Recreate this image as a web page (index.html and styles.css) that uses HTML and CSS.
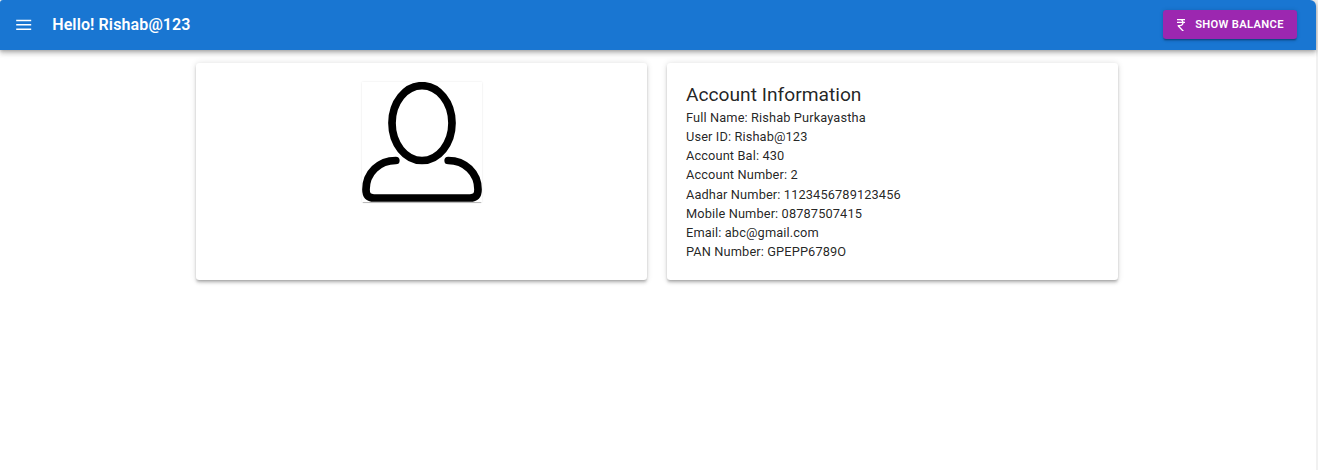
FILE: index.html
```html
<!DOCTYPE html>
<html lang="en">
<head>
<meta charset="utf-8">
<title>Account</title>
<link rel="stylesheet" href="styles.css">
</head>
<body>
<div class="page">
  <header class="app-bar">
    <svg class="menu-icon" viewBox="0 0 20 20"><path d="M2.200 4.700h15v1.500h-15zM2.200 9.100h15v1.500h-15zM2.200 13.600h15v1.500h-15z"/></svg>
    <h1 class="title">Hello! Rishab@123</h1>
    <button class="balance-button" type="button">
      <svg class="rupee-icon" viewBox="0 0 24 24"><path d="M13.66 7c-.56-1.18-1.76-2-3.16-2H6V3h12v2h-3.26c.48.58.84 1.26 1.05 2H18v2h-2.02c-.25 2.8-2.61 5-5.48 5h-.73l6.73 7h-2.77L7 14v-2h3.500c1.76 0 3.22-1.3 3.46-3H6V7h7.66z"/></svg>
      <span>SHOW BALANCE</span>
    </button>
  </header>
  <main class="cards">
    <section class="card">
      <svg class="avatar" viewBox="0 0 120 120">
        <ellipse cx="60" cy="41.100" rx="30" ry="37.400"/>
        <path d="M33.800 78.500C17 78.500 4 91 4 107.500C4 113.500 6.500 116 12 116H108C113.500 116 116 113.500 116 107.500C116 91 103 78.500 86.200 78.500"/>
      </svg>
    </section>
    <section class="card">
      <h2 class="card-title">Account Information</h2>
      <p class="line">Full Name: Rishab Purkayastha</p>
      <p class="line">User ID: Rishab@123</p>
      <p class="line">Account Bal: 430</p>
      <p class="line">Account Number: 2</p>
      <p class="line">Aadhar Number: 1123456789123456</p>
      <p class="line">Mobile Number: 08787507415</p>
      <p class="line">Email: abc@gmail.com</p>
      <p class="line">PAN Number: GPEPP6789O</p>
    </section>
  </main>
</div>
</body>
</html>
```
FILE: styles.css
```css
* { box-sizing: border-box; }
body {
  margin: 0;
  background: #f1f1f1;
  font-family: Roboto, sans-serif;
  color: rgba(0, 0, 0, 0.87);
  overflow: hidden;
}
.page {
  width: 1316px;
  height: 470px;
  background: #fff;
  border-top-right-radius: 6px;
}
.app-bar {
  display: flex;
  align-items: center;
  height: 50px;
  padding: 0 19px 1px 14px;
  background: #1976d2;
  color: #fff;
  border-radius: 3px 6px 0 0;
  box-shadow: 0 1.6px 3.2px -0.8px rgba(0, 0, 0, 0.2), 0 3.2px 4px rgba(0, 0, 0, 0.14), 0 0.8px 8px rgba(0, 0, 0, 0.12);
}
.menu-icon {
  width: 20px;
  height: 20px;
  fill: currentColor;
}
.title {
  flex: 1;
  margin: 0 0 0 18.2px;
  font-size: 16px;
  font-weight: 600;
  line-height: 25.6px;
  letter-spacing: 0.12px;
}
.balance-button {
  display: flex;
  align-items: center;
  width: 134px;
  height: 29.2px;
  padding: 0 0 0 9.8px;
  border: 0;
  border-radius: 3.2px;
  background: #9c27b0;
  color: #fff;
  font: 600 11.2px/19.6px Roboto, sans-serif;
  letter-spacing: 0.32px;
  white-space: nowrap;
  box-shadow: 0 2.4px 0.8px -1.6px rgba(0, 0, 0, 0.2), 0 1.6px 1.6px rgba(0, 0, 0, 0.14), 0 0.8px 4px rgba(0, 0, 0, 0.12);
}
.rupee-icon {
  width: 16px;
  height: 16px;
  margin-right: 6.4px;
  fill: currentColor;
}
.cards {
  display: grid;
  grid-template-columns: 1fr 1fr;
  gap: 19.6px;
  width: 922px;
  margin: 13px 0 0 196px;
}
.card {
  height: 217px;
  padding: 19.2px;
  border-radius: 3.2px;
  background: #fff;
  box-shadow: 0 2.4px 2.4px -1.6px rgba(0, 0, 0, 0.2), 0 2.4px 3.2px rgba(0, 0, 0, 0.14), 0 0.8px 6.4px rgba(0, 0, 0, 0.12);
}
.avatar {
  display: block;
  width: 120px;
  height: 120px;
  margin: 0 auto;
  fill: none;
  stroke: #000;
  stroke-width: 7.7;
  stroke-linecap: round;
  box-shadow: 0 1.6px 0.8px -0.8px rgba(0, 0, 0, 0.35), 0 0 2px rgba(0, 0, 0, 0.1);
}
.card-title {
  margin: 0;
  font-size: 19.2px;
  font-weight: 400;
  line-height: 25.6px;
}
.line {
  margin: 0;
  font-size: 12.8px;
  line-height: 19.2px;
  letter-spacing: 0.12px;
}
```
